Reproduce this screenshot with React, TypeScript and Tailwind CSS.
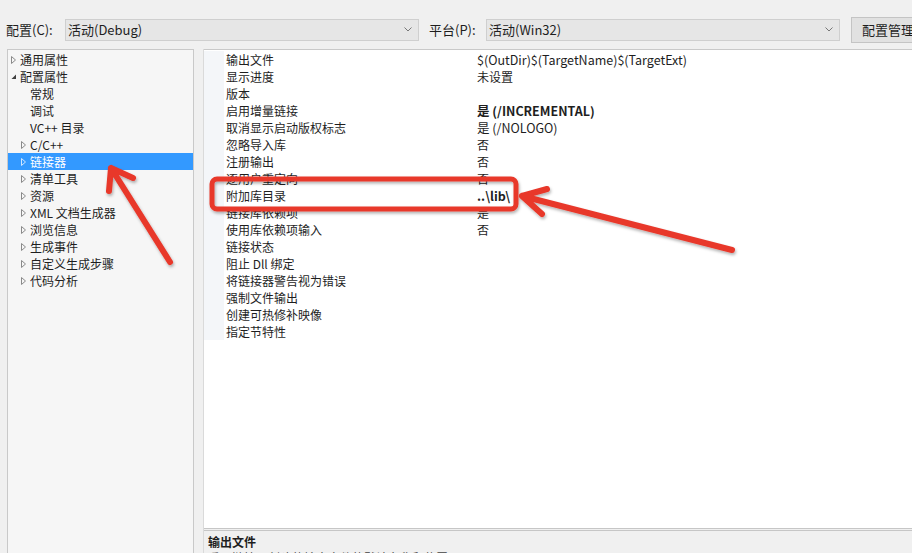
import React from 'react';

const font = { fontFamily: '"Noto Sans CJK SC", "Noto Sans", sans-serif' };

type TreeItem = { label: string; level: 0 | 1; icon: 'closed' | 'open' | 'none'; selected?: boolean };

const tree: TreeItem[] = [
  { label: '通用属性', level: 0, icon: 'closed' },
  { label: '配置属性', level: 0, icon: 'open' },
  { label: '常规', level: 1, icon: 'none' },
  { label: '调试', level: 1, icon: 'none' },
  { label: 'VC++ 目录', level: 1, icon: 'none' },
  { label: 'C/C++', level: 1, icon: 'closed' },
  { label: '链接器', level: 1, icon: 'closed', selected: true },
  { label: '清单工具', level: 1, icon: 'closed' },
  { label: '资源', level: 1, icon: 'closed' },
  { label: 'XML 文档生成器', level: 1, icon: 'closed' },
  { label: '浏览信息', level: 1, icon: 'closed' },
  { label: '生成事件', level: 1, icon: 'closed' },
  { label: '自定义生成步骤', level: 1, icon: 'closed' },
  { label: '代码分析', level: 1, icon: 'closed' },
];

// latin = value text is mostly latin, drawn a touch larger like Segoe UI
const props: { name: string; value?: string; bold?: boolean; latin?: boolean }[] = [
  { name: '输出文件', value: '$(OutDir)$(TargetName)$(TargetExt)', latin: true },
  { name: '显示进度', value: '未设置' },
  { name: '版本' },
  { name: '启用增量链接', value: '是 (/INCREMENTAL)', bold: true, latin: true },
  { name: '取消显示启动版权标志', value: '是 (/NOLOGO)', latin: true },
  { name: '忽略导入库', value: '否' },
  { name: '注册输出', value: '否' },
  { name: '逐用户重定向', value: '否' },
  { name: '附加库目录', value: '..\\lib\\', bold: true, latin: true },
  { name: '链接库依赖项', value: '是' },
  { name: '使用库依赖项输入', value: '否' },
  { name: '链接状态' },
  { name: '阻止 Dll 绑定' },
  { name: '将链接器警告视为错误' },
  { name: '强制文件输出' },
  { name: '创建可热修补映像' },
  { name: '指定节特性' },
];

const Expander = ({ kind, selected }: { kind: 'closed' | 'open' | 'none'; selected?: boolean }) => {
  if (kind === 'none') return <span className="w-[5px] shrink-0" />;
  if (kind === 'open')
    return (
      <svg width="5" height="7" viewBox="0 0 5 7" className="shrink-0">
        <path d="M5 1.5 L5 6 L0.5 6 Z" fill="#404040" />
      </svg>
    );
  return (
    <svg width="5" height="8" viewBox="0 0 5 8" className="shrink-0">
      <path d="M0.5 0.5 L4.5 4 L0.5 7.5 Z" fill="none" stroke={selected ? '#cfe6ff' : '#8a8a8a'} strokeWidth="1" />
    </svg>
  );
};

const Combo = ({ text }: { text: string }) => (
  <div className="w-[354px] h-[22px] shrink-0 bg-[#e6e6e6] border border-[#cfcfcf] flex items-center pl-[2px] pr-[6px] text-[13px] text-[#1e1e1e]">
    <span className="flex-1">{text}</span>
    <svg width="8" height="5" viewBox="0 0 8 5">
      <path d="M0.5 0.5 L4 4 L7.5 0.5" fill="none" stroke="#777" strokeWidth="1" />
    </svg>
  </div>
);

const App = () => {
  return (
    <div className="w-[912px] h-[553px] bg-[#f0f0f0] relative overflow-hidden flex flex-col text-[#1e1e1e]" style={font}>
      {/* top toolbar */}
      <div className="h-[49px] shrink-0 flex items-center pt-[10px] pl-[6px] text-[13px]">
        <span className="w-[59px] shrink-0">配置(C):</span>
        <Combo text="活动(Debug)" />
        <span className="ml-[10px] w-[57px] shrink-0">平台(P):</span>
        <Combo text="活动(Win32)" />
        <div className="ml-[11px] h-[26px] w-[100px] shrink-0 bg-[#e1e1e1] border border-[#c4c4c4] flex items-center pl-[10px] whitespace-nowrap">
          配置管理器...
        </div>
      </div>

      <div className="flex-1 flex min-h-0">
        {/* tree */}
        <div className="ml-[7px] w-[187px] shrink-0 bg-[#f6f6f6] border border-[#c9c9c9] border-b-0 pt-[1px] text-[12px]">
          {tree.map((t, i) => (
            <div
              key={i}
              className={`h-[17px] flex items-center gap-[4px] ${t.level === 0 ? 'pl-[3px]' : 'pl-[13px]'} ${
                t.selected ? 'bg-[#3399ff] text-white' : ''
              }`}
            >
              <Expander kind={t.icon} selected={t.selected} />
              <span className="leading-[17px]">{t.label}</span>
            </div>
          ))}
        </div>

        <div className="w-[10px] shrink-0 border-r border-[#dadada]" />

        {/* property grid */}
        <div className="flex-1 flex flex-col bg-white border-t border-[#c9c9c9]">
          <div className="flex-1 pt-[1px] text-[12px]">
            {props.map((p, i) => (
              <div key={i} className="h-[17px] flex items-center">
                <div className="w-[20px] h-full bg-[#f4f6f9]" />
                <div className="w-[251px] pl-[2px] leading-[17px] whitespace-nowrap">{p.name}</div>
                <div
                  className={`pl-[2px] leading-[17px] whitespace-nowrap ${p.latin ? 'text-[12.5px]' : ''} ${
                    p.bold ? 'font-bold' : ''
                  }`}
                >
                  {p.value}
                </div>
              </div>
            ))}
          </div>
          <div className="h-[25px] shrink-0 bg-[#f0f0f0] border-t-[3px] border-double border-[#c6c6c6] pl-[4px] text-[12px]">
            <div className="font-bold leading-[16px] pt-[3px]">输出文件</div>
            <div className="leading-[16px] text-[#444]">重写链接器创建的输出文件的默认名称和位置。</div>
          </div>
        </div>
      </div>

      {/* red annotations */}
      <svg className="absolute inset-0 pointer-events-none" width="912" height="553" viewBox="0 0 912 553">
        <defs>
          <filter id="sh" x="-20%" y="-20%" width="140%" height="140%">
            <feDropShadow dx="1" dy="2" stdDeviation="1.5" floodColor="#000" floodOpacity="0.3" />
          </filter>
        </defs>
        <g filter="url(#sh)" stroke="#e8392c" fill="none" strokeLinecap="round" strokeLinejoin="round">
          <rect x="212" y="179" width="304" height="30" rx="5" strokeWidth="5" />
          <path d="M732 250 L522 196 M522 196 L547 189 M522 196 L542 214" strokeWidth="6" />
          <path d="M170 262 L111 168 M111 168 L109 191 M111 168 L133 178" strokeWidth="6" />
        </g>
      </svg>
    </div>
  );
};

export default App;
